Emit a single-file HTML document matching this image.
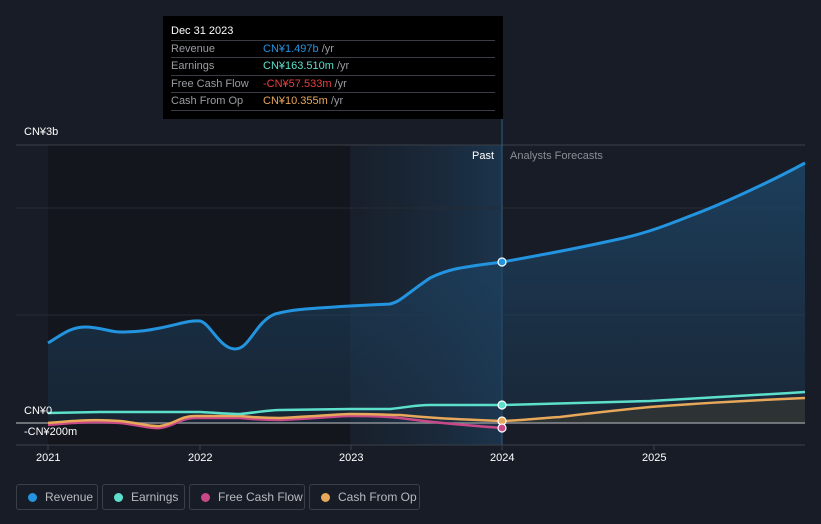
<!DOCTYPE html>
<html><head><meta charset="utf-8"><style>
html,body{margin:0;width:821px;height:524px;overflow:hidden}
body{background:#181c26;font-family:"Liberation Sans",sans-serif;position:relative}
.t{position:absolute;font-size:11px;color:#fff;white-space:nowrap}
.tip{position:absolute;left:163px;top:16px;width:340px;height:103px;background:#000}
.tip .h{position:absolute;left:8px;top:9px;font-size:11px;color:#fff}
.row{position:absolute;left:8px;width:324px;height:17px;border-top:1px solid #3a3d44;font-size:11px;color:#9a9ca2;line-height:17px;white-space:nowrap}
.row span{position:absolute;left:92px}
.lg{position:absolute;top:484px;height:26px;border:1px solid #3a3f4a;border-radius:3px;font-size:12px;color:#b8bac0;line-height:24px;box-sizing:border-box;white-space:nowrap;overflow:hidden}
.lg i{display:inline-block;width:9px;height:9px;border-radius:50%;margin:0 8px 0 11px;vertical-align:-1px}
</style></head><body>
<svg width="821" height="524" style="position:absolute;left:0;top:0">
<defs><linearGradient id="g" x1="0" y1="0" x2="0" y2="1"><stop offset="0" stop-color="#1d4a6e" stop-opacity=".75"/><stop offset="1" stop-color="#1d3a55" stop-opacity=".4"/></linearGradient>
<linearGradient id="p" x1="0" y1="0" x2="1" y2="0"><stop offset="0" stop-color="#1a2c3e" stop-opacity=".2"/><stop offset="1" stop-color="#1c3a55" stop-opacity=".8"/></linearGradient></defs>
<rect x="48" y="145" width="302" height="300" fill="#13161d"/>
<rect x="350" y="145" width="152" height="300" fill="url(#p)"/>
<line x1="16" y1="145" x2="805" y2="145" stroke="#3a3f48"/>
<line x1="16" y1="208" x2="805" y2="208" stroke="#262b34"/>
<line x1="16" y1="315" x2="805" y2="315" stroke="#262b34"/>
<line x1="502" y1="118" x2="502" y2="445" stroke="#2b5f86"/>
<path d="M48,343 C60,336 70,327 85,327 C100,327 110,332 120,332 C140,332 150,330 160,328 C180,324 190,320 200,321 C210,323 220,349 235,349 C250,349 255,322 275,314 C290,310 300,309 350,306 L390,304 C400,302 405,295 430,278 C450,268 465,267 502,262 C540,255 560,252 610,241 C640,235 660,228 690,216 C720,205 770,182 805,163 L805,423 L48,423Z" fill="url(#g)"/>
<path d="M48,343 C60,336 70,327 85,327 C100,327 110,332 120,332 C140,332 150,330 160,328 C180,324 190,320 200,321 C210,323 220,349 235,349 C250,349 255,322 275,314 C290,310 300,309 350,306 L390,304 C400,302 405,295 430,278 C450,268 465,267 502,262 C540,255 560,252 610,241 C640,235 660,228 690,216 C720,205 770,182 805,163" fill="none" stroke="#2394df" stroke-width="3"/>
<path d="M502,421 L560,417 L650,407 L805,398 L805,423 L502,423Z" fill="#3a3a30" opacity=".6"/>
<line x1="16" y1="423" x2="805" y2="423" stroke="#8a8d93" stroke-width="1.5"/>
<path d="M48,425 C70,423 90,421 120,423 C140,425 150,429 160,428 C175,426 180,418 195,418 L240,418 C260,420 270,420 280,420 C320,418 340,416 350,416 C380,416 390,417 400,418 C430,422 450,424 502,428" fill="none" stroke="#c94888" stroke-width="2.5"/>
<path d="M48,423 C70,421 90,419 120,421 C140,423 150,427 160,426 C175,424 180,416 195,416 L240,416 C260,418 270,418 280,418 C320,416 340,414 350,414 C380,414 390,415 400,415 C430,418 450,419 502,421 C530,420 540,418 560,417 C600,412 620,410 650,407 C700,403 760,400 805,398" fill="none" stroke="#e8a85a" stroke-width="2.5"/>
<path d="M48,413 L100,412 L200,412 C220,413 230,414 240,414 C260,412 270,410 280,410 L350,409 L390,409 C410,407 415,405 430,405 L502,405 L650,401 C720,397 760,395 805,392" fill="none" stroke="#5ce0cc" stroke-width="2.5"/>
<circle cx="502" cy="262" r="4" fill="#2394df" stroke="#fff" stroke-width="1.2"/>
<circle cx="502" cy="405" r="4" fill="#5ce0cc" stroke="#fff" stroke-width="1.2"/>
<circle cx="502" cy="421" r="4" fill="#e8a85a" stroke="#fff" stroke-width="1.2"/>
<circle cx="502" cy="428" r="4" fill="#c94888" stroke="#fff" stroke-width="1.2"/>
<line x1="16" y1="445" x2="805" y2="445" stroke="#3a3f48"/>
<g stroke="#3a3f48"><line x1="48" y1="445" x2="48" y2="450"/><line x1="200" y1="445" x2="200" y2="450"/><line x1="351" y1="445" x2="351" y2="450"/><line x1="502" y1="445" x2="502" y2="450"/><line x1="654" y1="445" x2="654" y2="450"/></g>
</svg>
<div class="t" style="left:24px;top:126px">CN¥3b</div>
<div class="t" style="left:24px;top:405px">CN¥0</div>
<div class="t" style="left:24px;top:426px">-CN¥200m</div>
<div class="t" style="left:472px;top:150px">Past</div>
<div class="t" style="left:510px;top:150px;color:#8a8e96">Analysts Forecasts</div>
<div class="t" style="left:36px;top:452px">2021</div>
<div class="t" style="left:188px;top:452px">2022</div>
<div class="t" style="left:339px;top:452px">2023</div>
<div class="t" style="left:490px;top:452px">2024</div>
<div class="t" style="left:642px;top:452px">2025</div>
<div class="tip"><div class="h">Dec 31 2023</div>
<div class="row" style="top:24px">Revenue<span><b style="font-weight:normal;color:#2394df">CN¥1.497b</b> /yr</span></div>
<div class="row" style="top:41px">Earnings<span><b style="font-weight:normal;color:#5ce0cc">CN¥163.510m</b> /yr</span></div>
<div class="row" style="top:59px">Free Cash Flow<span><b style="font-weight:normal;color:#e84040">-CN¥57.533m</b> /yr</span></div>
<div class="row" style="top:76px;border-bottom:1px solid #3a3d44">Cash From Op<span><b style="font-weight:normal;color:#e8a85a">CN¥10.355m</b> /yr</span></div>
</div>
<div class="lg" style="left:16px;width:82px"><i style="background:#2394df"></i>Revenue</div>
<div class="lg" style="left:102px;width:83px"><i style="background:#5ce0cc"></i>Earnings</div>
<div class="lg" style="left:189px;width:116px"><i style="background:#c94888"></i>Free Cash Flow</div>
<div class="lg" style="left:309px;width:111px"><i style="background:#e8a85a"></i>Cash From Op</div>
</body></html>
